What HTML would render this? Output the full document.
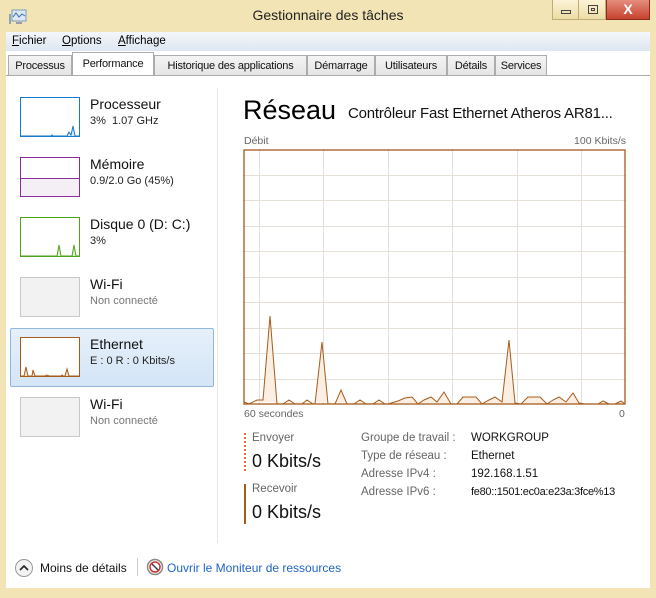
<!DOCTYPE html><html><head><meta charset="utf-8"><style>
*{margin:0;padding:0;box-sizing:border-box}
body{width:656px;height:598px;background:#f2e4b4;font-family:"Liberation Sans",sans-serif;position:relative;overflow:hidden;color:#000}
.abs{position:absolute;white-space:nowrap}
.title{left:0;top:7px;width:656px;text-align:center;font-size:14px;color:#222}
.menu{left:6px;top:32px;width:644px;height:19px;background:linear-gradient(#f4f7fb,#dde6f1);font-size:11.5px}
.menu span{position:absolute;top:3px}
.tabs{left:6px;top:51px;width:644px;height:25px;background:#fff}
.tab{position:absolute;top:4px;height:21px;border:1px solid #acacac;border-bottom:none;background:linear-gradient(#f4f4f4,#e4e4e4);font-size:11px;letter-spacing:-0.2px;padding:4px 0 0;text-align:center;color:#111;white-space:nowrap;overflow:hidden}
.tab.sel{top:1px;height:25px;background:#fff;padding-top:5px}
.panel{left:6px;top:75px;width:644px;height:513px;background:#fff;border-top:1px solid #acacac}
.th{position:absolute;left:20px;width:60px;height:40px;border:1px solid}
.nm{position:absolute;left:90px;font-size:14px;color:#111}
.sb{position:absolute;left:90px;font-size:11px;color:#222}
.gray{color:#777}
.lbl{font-size:11.5px;color:#666}
.val{font-size:11.5px;color:#111}
</style></head><body>
<svg class="abs" style="left:8px;top:8px" width="20" height="18"><rect x="4" y="2" width="14" height="11" fill="#dce9f5" stroke="#7a9bc0"/><polyline points="5,9 8,5 11,9 14,6 17,8" fill="none" stroke="#3a6fb0"/><rect x="1" y="6" width="2" height="10" fill="#8aa"/><rect x="8" y="14" width="6" height="2" fill="#99a"/></svg>
<div class="abs title">Gestionnaire des tâches</div>
<div class="abs" style="left:552px;top:0;width:27px;height:20px;border:1px solid #bfae7a;border-top:none;background:linear-gradient(#fbf3d6,#ecdca4)"><div style="position:absolute;left:8px;top:10px;width:10px;height:4px;border:1px solid #444"></div></div>
<div class="abs" style="left:578px;top:0;width:28px;height:20px;border:1px solid #bfae7a;border-top:none;background:linear-gradient(#fbf3d6,#ecdca4)"><div style="position:absolute;left:9px;top:5px;width:10px;height:9px;border:1px solid #444"><div style="margin:2px;width:4px;height:3px;border:1px solid #444"></div></div></div>
<div class="abs" style="left:606px;top:0;width:44px;height:20px;border:1px solid #8a2a20;border-top:none;background:linear-gradient(#e58d7c,#c7432f);color:#fff;font-weight:bold;font-size:14px;text-align:center;line-height:18px">X</div>
<div class="abs menu"><span style="left:6px"><u>F</u>ichier</span><span style="left:56px"><u>O</u>ptions</span><span style="left:112px"><u>A</u>ffichage</span></div>
<div class="abs tabs">
<div class="tab" style="left:2px;width:64px">Processus</div>
<div class="tab" style="left:148px;width:153px">Historique des applications</div>
<div class="tab" style="left:301px;width:68px">Démarrage</div>
<div class="tab" style="left:369px;width:72px">Utilisateurs</div>
<div class="tab" style="left:441px;width:48px">Détails</div>
<div class="tab" style="left:489px;width:52px">Services</div>
<div class="tab sel" style="left:66px;width:82px;border-color:#acacac">Performance</div>
</div>
<div class="abs panel"></div>
<div class="abs" style="left:217px;top:88px;width:1px;height:455px;background:#e8e8e8"></div>
<div class="abs" style="left:10px;top:328px;width:204px;height:59px;background:linear-gradient(#e6f0fa,#d3e5f7);border:1px solid #92b8dc;border-radius:2px"></div>
<div class="th" style="top:97px;border-color:#1979ca"></div>
<svg class="abs" style="left:21px;top:98px" width="58" height="38"><polyline points="0,38 30,38 31,37 32,38 46,38 48,34 50,37 52,28 54,38 58,38" fill="#d7e9f7" stroke="#1979ca"/></svg>
<div class="nm" style="top:96px">Processeur</div><div class="sb" style="top:115px">3%&nbsp; 1.07 GHz</div>
<div class="th" style="top:157px;border-color:#8b2a9b"></div>
<div class="abs" style="left:21px;top:178px;width:58px;height:18px;background:#f4eef5;border-top:1px solid #8b2a9b"></div>
<div class="nm" style="top:156px">Mémoire</div><div class="sb" style="top:175px">0.9/2.0 Go (45%)</div>
<div class="th" style="top:217px;border-color:#4ea31a"></div>
<svg class="abs" style="left:21px;top:218px" width="58" height="38"><polyline points="0,38 36,38 38,27 40,38 51,38 53,27 55,38 58,38" fill="#e3f2d8" stroke="#4ea31a"/></svg>
<div class="nm" style="top:216px">Disque 0 (D: C:)</div><div class="sb" style="top:235px">3%</div>
<div class="th" style="top:277px;border-color:#c8c8c8;background:#f2f2f2"></div>
<div class="nm" style="top:276px">Wi-Fi</div><div class="sb gray" style="top:295px">Non connecté</div>
<div class="th" style="top:337px;border-color:#a75b1a;background:#fff"></div>
<svg class="abs" style="left:21px;top:338px" width="58" height="38"><polyline points="0,38 3,38 5,29 7,38 11,38 12,32 14,38 24,38 26,37 28,38 34,38 40,38 41,37 42,38 44,38 46,31 48,38 58,38" fill="#f5e4d6" stroke="#a75b1a"/></svg>
<div class="nm" style="top:336px">Ethernet</div><div class="sb" style="top:355px">E : 0 R : 0 Kbits/s</div>
<div class="th" style="top:397px;border-color:#c8c8c8;background:#f2f2f2"></div>
<div class="nm" style="top:396px">Wi-Fi</div><div class="sb gray" style="top:415px">Non connecté</div>

<div class="abs" style="left:243px;top:95px;font-size:27px;color:#000">Réseau</div>
<div class="abs" style="left:348px;top:105px;font-size:15px;letter-spacing:-0.2px;color:#111">Contrôleur Fast Ethernet Atheros AR81...</div>
<div class="abs lbl" style="left:244px;top:135px;font-size:10.5px">Débit</div>
<div class="abs lbl" style="left:560px;top:135px;font-size:10.5px;width:66px;text-align:right">100 Kbits/s</div>
<svg class="abs" style="left:243px;top:149px" width="384" height="257">
<g stroke="#e6dfd8" stroke-width="1">
<line x1="16.5" y1="0" x2="16.5" y2="256"/><line x1="80.5" y1="0" x2="80.5" y2="256"/><line x1="145.5" y1="0" x2="145.5" y2="256"/><line x1="209.5" y1="0" x2="209.5" y2="256"/><line x1="274.5" y1="0" x2="274.5" y2="256"/><line x1="338.5" y1="0" x2="338.5" y2="256"/>
<line x1="0" y1="26.5" x2="383" y2="26.5"/><line x1="0" y1="51.5" x2="383" y2="51.5"/><line x1="0" y1="77.5" x2="383" y2="77.5"/><line x1="0" y1="102.5" x2="383" y2="102.5"/><line x1="0" y1="128.5" x2="383" y2="128.5"/><line x1="0" y1="153.5" x2="383" y2="153.5"/><line x1="0" y1="179.5" x2="383" y2="179.5"/><line x1="0" y1="204.5" x2="383" y2="204.5"/><line x1="0" y1="230.5" x2="383" y2="230.5"/>
</g>
<g transform="translate(-243,-149)">
<polyline fill="#fbeee3" stroke="#a75b1a" stroke-width="1" points="244,402 249,404 257,400 263,400 270,316 277,404 283,404 289,400 295,404 302,404 307,400 313,404 315,404 322,342 328,404 335,404 341,390 347,404 354,404 360,400 366,404 373,404 379,400 385,404 388,404 398,401 405,398 412,397 418,404 424,400 431,397 437,402 444,392 451,404 457,404 463,397 470,397 476,397 482,404 489,400 495,397 502,402 509,340 515,403 521,404 528,397 534,397 540,397 547,404 553,400 559,397 566,402 573,393 579,403 585,404 592,404 598,404 603,401 609,404 615,404 621,401 625,404"/>
</g>
<rect x="1" y="1" width="381" height="254" fill="none" stroke="#a75b1a" stroke-width="1.3"/>
</svg>
<div class="abs lbl" style="left:244px;top:408px;font-size:10.5px">60 secondes</div>
<div class="abs lbl" style="left:619px;top:408px;font-size:10.5px">0</div>

<div class="abs" style="left:244px;top:433px;width:0;height:38px;border-left:2px dotted #d2763c"></div>
<div class="abs lbl" style="left:252px;top:432px">Envoyer</div>
<div class="abs" style="left:252px;top:451px;font-size:18px;color:#111">0 Kbits/s</div>
<div class="abs" style="left:244px;top:484px;width:2px;height:40px;background:#a75b1a"></div>
<div class="abs lbl" style="left:252px;top:483px">Recevoir</div>
<div class="abs" style="left:252px;top:502px;font-size:18px;color:#111">0 Kbits/s</div>

<div class="abs lbl" style="left:361px;top:432px">Groupe de travail :</div><div class="abs val" style="left:471px;top:432px">WORKGROUP</div>
<div class="abs lbl" style="left:361px;top:450px">Type de réseau :</div><div class="abs val" style="left:471px;top:450px">Ethernet</div>
<div class="abs lbl" style="left:361px;top:468px">Adresse IPv4 :</div><div class="abs val" style="left:471px;top:468px">192.168.1.51</div>
<div class="abs lbl" style="left:361px;top:486px">Adresse IPv6 :</div><div class="abs val" style="left:471px;top:486px;font-size:11px;letter-spacing:-0.3px">fe80::1501:ec0a:e23a:3fce%13</div>

<svg class="abs" style="left:14px;top:558px" width="20" height="20"><circle cx="10" cy="10" r="8.5" fill="#f3f3f3" stroke="#999"/><polyline points="6,12 10,8 14,12" fill="none" stroke="#222" stroke-width="1.6"/></svg>
<div class="abs" style="left:40px;top:561px;font-size:12px;color:#111">Moins de détails</div>
<div class="abs" style="left:137px;top:558px;width:1px;height:18px;background:#ccc"></div>
<svg class="abs" style="left:146px;top:558px" width="18" height="18"><circle cx="9" cy="9" r="7.5" fill="#fff" stroke="#888" stroke-width="1.5"/><circle cx="9" cy="9" r="5" fill="none" stroke="#c33" stroke-width="1.5"/><line x1="6" y1="6" x2="12" y2="12" stroke="#333" stroke-width="1.3"/></svg>
<div class="abs" style="left:167px;top:561px;font-size:12px;color:#1e64c8">Ouvrir le Moniteur de ressources</div>
</body></html>
